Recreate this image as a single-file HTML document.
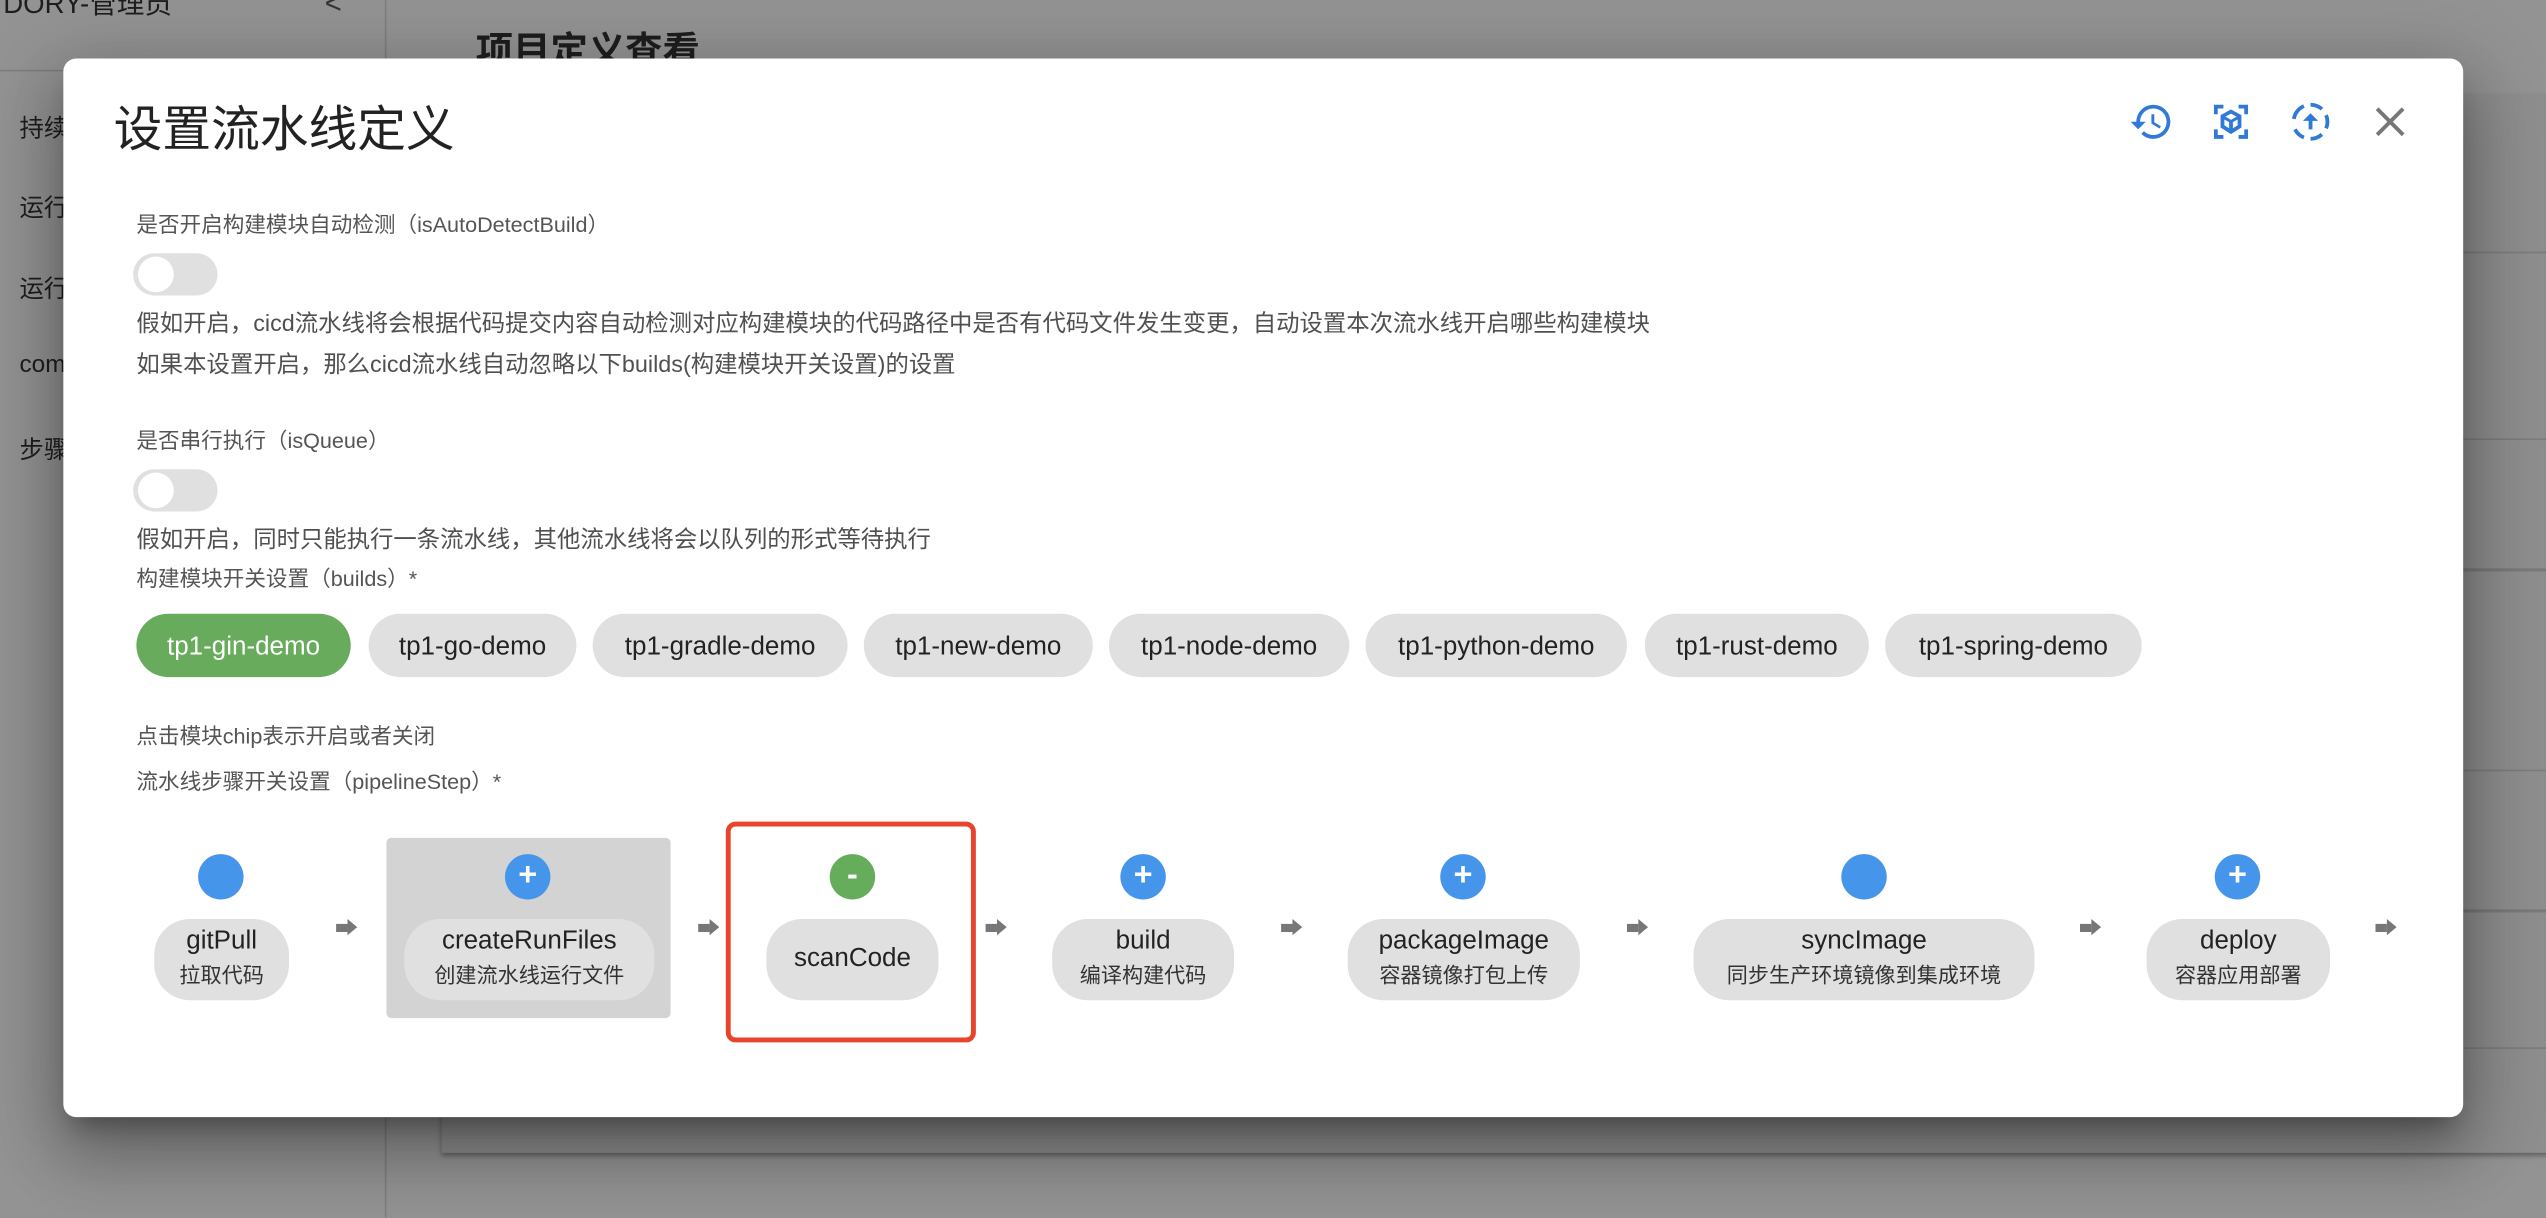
<!DOCTYPE html>
<html><head><meta charset="utf-8">
<style>
html,body{margin:0;padding:0;width:2546px;height:1218px;overflow:hidden;background:#8f8f8f;}
#s{position:absolute;left:0;top:0;width:1568px;height:750px;transform:scale(1.62372);transform-origin:0 0;font-family:"Liberation Sans","Noto Sans CJK SC",sans-serif;background:#939393;overflow:hidden;}
.a{position:absolute;white-space:nowrap;}
.side{color:#1e1e1e;font-size:15px;}
.t{color:#555;font-size:13.3px;}
.d{color:#505050;font-size:14.4px;}
.tog{position:absolute;width:52px;height:26px;border-radius:13px;background:#e0e0e0;}
.tog:after{content:"";position:absolute;left:3px;top:2px;width:22px;height:22px;border-radius:50%;background:#fff;}
.chip{position:absolute;top:378px;height:39px;border-radius:20px;background:#e0e0e0;color:#222;font-size:16px;line-height:41px;text-align:center;}
.c{position:absolute;top:526px;width:28px;height:28px;border-radius:50%;background:#4596ea;color:#fff;font-size:20px;font-weight:bold;line-height:27px;text-align:center;}
.p{position:absolute;top:566px;height:50px;border-radius:22px;background:#e0e0e0;text-align:center;color:#222;}
.p b{display:block;font-weight:normal;font-size:16px;margin-top:3px;line-height:22px;}
.p i{display:block;font-style:normal;font-size:13px;line-height:20px;color:#333;}
.ar{position:absolute;top:565px;width:0;height:0;}
.ar:before{content:"";position:absolute;left:0;top:4px;width:7px;height:5px;background:#777;}
.ar:after{content:"";position:absolute;left:7px;top:1px;border-left:6px solid #777;border-top:5.5px solid transparent;border-bottom:5.5px solid transparent;}
</style></head><body>
<div id="s">
<div class="a" style="left:0;top:0;width:237px;height:750px;border-right:1px solid #7e7e7e;"></div>
<div class="a" style="left:0;top:43px;width:237px;height:1px;background:#7e7e7e;"></div>
<div class="a side" style="left:2px;top:-12px;font-size:17px;">DORY-管理员</div>
<div class="a" style="left:200px;top:-8px;color:#333;font-size:18px;">&lt;</div>
<div class="a side" style="left:12px;top:68px;">持续</div>
<div class="a side" style="left:12px;top:117px;">运行</div>
<div class="a side" style="left:12px;top:167px;">运行</div>
<div class="a side" style="left:12px;top:216px;">com</div>
<div class="a side" style="left:12px;top:266px;">步骤</div>
<div class="a" style="left:293px;top:12px;font-size:23px;font-weight:bold;color:#1e1e1e;">项目定义查看</div>
<div class="a" style="left:272px;top:58px;width:1300px;height:652px;box-shadow:0 2px 3px rgba(0,0,0,.35);background:#8e8e8e;"></div>
<div class="a" style="left:1517px;top:155px;width:60px;height:1px;background:#7c7c7c;"></div>
<div class="a" style="left:1517px;top:270px;width:60px;height:1px;background:#7c7c7c;"></div>
<div class="a" style="left:1517px;top:350px;width:60px;height:2px;background:#7a7a7a;"></div>
<div class="a" style="left:1517px;top:474px;width:60px;height:1px;background:#7c7c7c;"></div>
<div class="a" style="left:1517px;top:560px;width:60px;height:2px;background:#7a7a7a;"></div>
<div class="a" style="left:1517px;top:645px;width:60px;height:1px;background:#7c7c7c;"></div>
<div class="a" style="left:39px;top:36px;width:1478px;height:652px;background:#fff;border-radius:8px;box-shadow:0 11px 15px -7px rgba(0,0,0,.3),0 24px 38px 3px rgba(0,0,0,.2),0 9px 46px 8px rgba(0,0,0,.18);"></div>
<div class="a" style="left:70px;top:55px;font-size:30px;color:#222;">设置流水线定义</div>
<svg class="a" style="left:1311px;top:61px" width="28" height="28" viewBox="0 0 24 24"><path fill="#3079d6" d="M13 3a9 9 0 0 0-9 9H1l3.89 3.89.07.14L9 12H6c0-3.870 3.13-7 7-7s7 3.13 7 7-3.13 7-7 7c-1.930 0-3.68-.79-4.94-2.06l-1.42 1.42A8.95 8.95 0 0 0 13 21a9 9 0 0 0 0-18zm-1 5v5l4.28 2.54.72-1.21-3.5-2.08V8H12z"/></svg>
<svg class="a" style="left:1360px;top:61px" width="28" height="28" viewBox="0 0 24 24"><path fill="#3079d6" d="M3 3h5v2H5v3H3V3zm13 0h5v5h-2V5h-3V3zM3 16h2v3h3v2H3v-5zm16 0h2v5h-5v-2h3v-3zM12 5.5l5.5 3v6.5L12 18.5 6.5 15V8.5L12 5.5zm0 2.2L9 9.3l3 1.7 3-1.7-3-1.6zM8.5 10.8v3.1l2.5 1.5v-3.2l-2.5-1.4zm7 0L13 12.2v3.2l2.5-1.5v-3.1z"/></svg>
<svg class="a" style="left:1409px;top:61px" width="28" height="28" viewBox="0 0 24 24"><g fill="none" stroke="#3079d6" stroke-width="2"><path d="M12 3a9 9 0 0 1 6 2.3" /><path d="M20.2 8.5a9 9 0 0 1 0 7"/><path d="M18 18.7A9 9 0 0 1 12 21"/><path d="M8.5 20.3A9 9 0 0 1 3.8 16"/><path d="M3.2 10.5A9 9 0 0 1 8.5 3.7"/></g><path fill="#3079d6" d="M12 7.5l-4 4h3v4.5h2v-4.5h3z"/></svg>
<svg class="a" style="left:1460px;top:63px" width="24" height="24" viewBox="0 0 24 24"><path stroke="#777" stroke-width="2.4" d="M4 4l16 16M20 4L4 20"/></svg>
<div class="a t" style="left:84px;top:128px;">是否开启构建模块自动检测（isAutoDetectBuild）</div>
<div class="tog" style="left:82px;top:156px;"></div>
<div class="a d" style="left:84px;top:188px;">假如开启，cicd流水线将会根据代码提交内容自动检测对应构建模块的代码路径中是否有代码文件发生变更，自动设置本次流水线开启哪些构建模块</div>
<div class="a d" style="left:84px;top:213px;">如果本设置开启，那么cicd流水线自动忽略以下builds(构建模块开关设置)的设置</div>
<div class="a t" style="left:84px;top:261px;">是否串行执行（isQueue）</div>
<div class="tog" style="left:82px;top:289px;"></div>
<div class="a d" style="left:84px;top:321px;">假如开启，同时只能执行一条流水线，其他流水线将会以队列的形式等待执行</div>
<div class="a t" style="left:84px;top:346px;">构建模块开关设置（builds）*</div>
<div class="chip" style="left:84px;width:132px;background:#68ab5c;color:#fff;">tp1-gin-demo</div>
<div class="chip" style="left:227px;width:128px;">tp1-go-demo</div>
<div class="chip" style="left:365px;width:157px;">tp1-gradle-demo</div>
<div class="chip" style="left:532px;width:141px;">tp1-new-demo</div>
<div class="chip" style="left:683px;width:148px;">tp1-node-demo</div>
<div class="chip" style="left:841px;width:161px;">tp1-python-demo</div>
<div class="chip" style="left:1013px;width:138px;">tp1-rust-demo</div>
<div class="chip" style="left:1161px;width:158px;">tp1-spring-demo</div>
<div class="a t" style="left:84px;top:443px;">点击模块chip表示开启或者关闭</div>
<div class="a t" style="left:84px;top:471px;">流水线步骤开关设置（pipelineStep）*</div>
<div class="a" style="left:238px;top:516px;width:175px;height:111px;background:#d3d3d3;border-radius:3px;"></div>
<div class="a" style="left:447px;top:506px;width:148px;height:130px;border:3px solid #e8442b;border-radius:6px;"></div>
<div class="c" style="left:122px;"></div>
<div class="p" style="left:95px;width:83px;"><b>gitPull</b><i>拉取代码</i></div>
<div class="ar" style="left:207px;"></div>
<div class="c" style="left:311px;">+</div>
<div class="p" style="left:249px;width:154px;"><b>createRunFiles</b><i>创建流水线运行文件</i></div>
<div class="ar" style="left:430px;"></div>
<div class="c" style="left:511px;background:#65ad5a;">-</div>
<div class="p" style="left:472px;width:106px;"><b style="margin-top:14px;">scanCode</b></div>
<div class="ar" style="left:607px;"></div>
<div class="c" style="left:690px;">+</div>
<div class="p" style="left:648px;width:112px;"><b>build</b><i>编译构建代码</i></div>
<div class="ar" style="left:789px;"></div>
<div class="c" style="left:887px;">+</div>
<div class="p" style="left:830px;width:143px;"><b>packageImage</b><i>容器镜像打包上传</i></div>
<div class="ar" style="left:1002px;"></div>
<div class="c" style="left:1134px;"></div>
<div class="p" style="left:1043px;width:210px;"><b>syncImage</b><i>同步生产环境镜像到集成环境</i></div>
<div class="ar" style="left:1281px;"></div>
<div class="c" style="left:1364px;">+</div>
<div class="p" style="left:1322px;width:113px;"><b>deploy</b><i>容器应用部署</i></div>
<div class="ar" style="left:1463px;"></div>
</div>
</body></html>
